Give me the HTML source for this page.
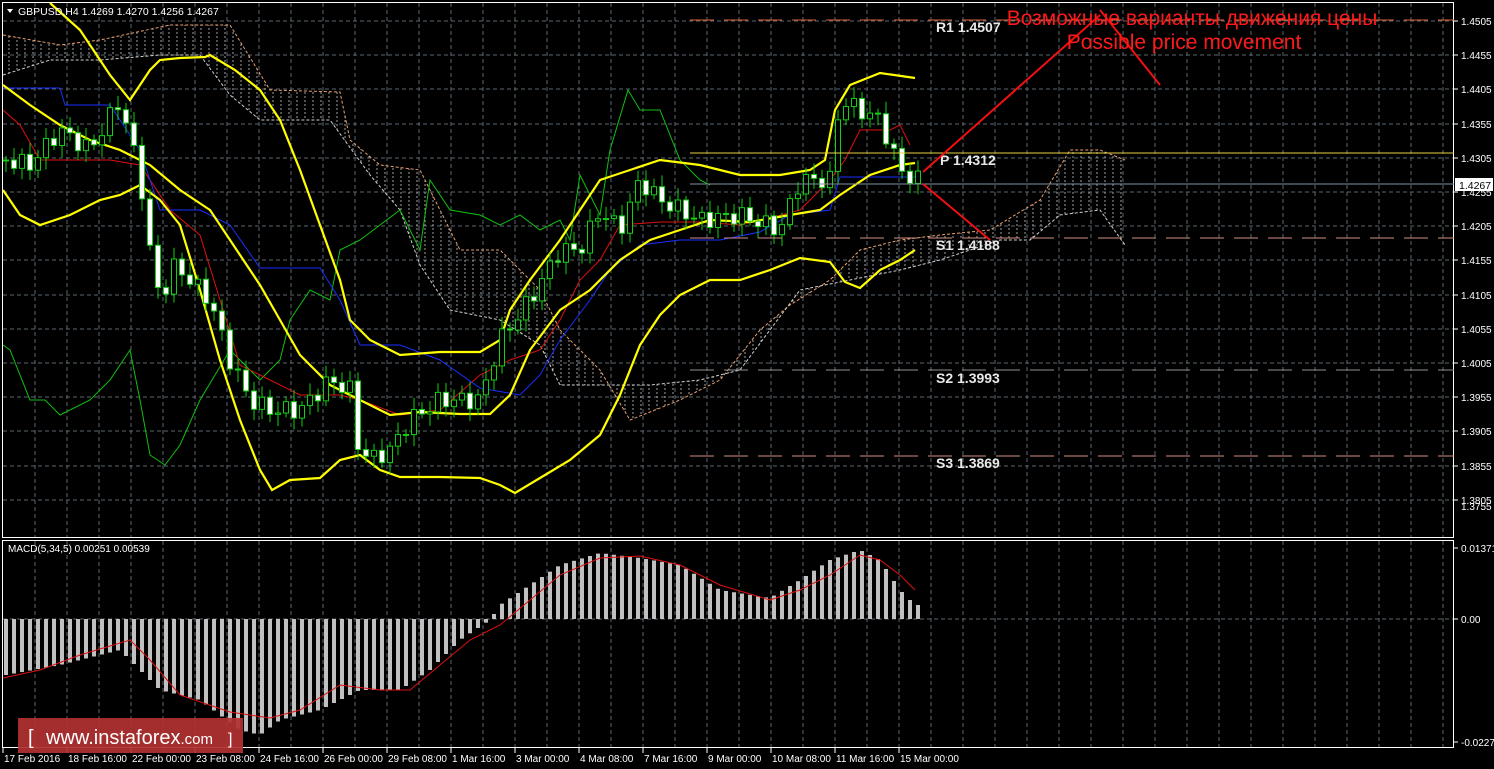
<!DOCTYPE html>
<html><head><meta charset="utf-8"><style>
html,body{margin:0;padding:0;background:#000;width:1494px;height:769px;overflow:hidden}
svg{display:block}
text{font-family:"Liberation Sans",sans-serif}
</style></head><body>
<svg id="s" width="1494" height="769" xmlns="http://www.w3.org/2000/svg">
<rect width="1494" height="769" fill="#000"/>
<defs>
<pattern id="hat" width="8" height="4" patternUnits="userSpaceOnUse"><line x1="1" y1="0" x2="1" y2="2" stroke="#c8c8c8" stroke-width="1"/></pattern>
</defs>
<g id="grid"></g>
<g id="cloud"></g>
<g id="lines"></g>
<g id="cand"></g>
<g id="macd"></g>
<rect x="2.5" y="2.5" width="1451" height="535" fill="none" stroke="#fff"/>
<rect x="2.5" y="540.5" width="1451" height="207" fill="none" stroke="#fff"/>
<line x1="690" y1="20" x2="1454" y2="20" stroke="#e0603a" stroke-dasharray="24,10"/>
<line x1="690" y1="153" x2="1454" y2="153" stroke="#e8d040"/>
<line x1="690" y1="184" x2="1454" y2="184" stroke="#8090a0"/>
<line x1="690" y1="238" x2="1454" y2="238" stroke="#d09080" stroke-dasharray="24,10"/>
<line x1="690" y1="370" x2="1454" y2="370" stroke="#909090" stroke-dasharray="24,10"/>
<line x1="690" y1="456" x2="1454" y2="456" stroke="#d09080" stroke-dasharray="24,10"/>
<g font-family="Liberation Mono,monospace" font-size="14" fill="#e8e8e8" font-weight="bold">
<text x="936" y="32">R1 1.4507</text>
<text x="940" y="165">P 1.4312</text>
<text x="936" y="250">S1 1.4188</text>
<text x="936" y="383">S2 1.3993</text>
<text x="936" y="468">S3 1.3869</text>
</g>
<g stroke="#f01010" stroke-width="2" fill="none">
<line x1="923" y1="172" x2="1100" y2="15"/>
<line x1="1100" y1="10" x2="1160" y2="85"/>
<line x1="923" y1="184" x2="990" y2="240"/>
</g>
<text x="1192" y="25" fill="#ff1a1a" font-size="21" text-anchor="middle">Возможные варианты движения цены</text>
<text x="1184" y="49" fill="#ff1a1a" font-size="21" text-anchor="middle">Possible price movement</text>
<path d="M7 9 L13 9 L10 13 Z" fill="#fff"/>
<text x="18" y="15" fill="#fff" font-size="10.5">GBPUSD,H4  1.4269 1.4270 1.4256 1.4267</text>
<text x="8" y="552" fill="#fff" font-size="10">MACD(5,34,5) 0.00251 0.00539</text>
<g id="axis" font-size="10" fill="#fff"></g>
<rect x="1455" y="178" width="38" height="13" fill="#fff"/>
<text x="1459" y="189" fill="#000" font-size="10.5">1.4267</text>
<rect x="18" y="718" width="225" height="35" fill="#b03232" opacity="0.93"/>
<text x="28" y="744" fill="#fff" font-size="20">[</text>
<text x="46" y="744" fill="#fff" font-size="20">www.instaforex<tspan font-size="15">.com</tspan></text>
<text x="228" y="744" fill="#fff" font-size="16">]</text>
</svg>
<script>
(function(){
var NS="http://www.w3.org/2000/svg";
function el(p,t,a){var e=document.createElementNS(NS,t);for(var k in a)e.setAttribute(k,a[k]);document.getElementById(p).appendChild(e);return e;}
function interp(pts,x){if(x<=pts[0][0])return pts[0][1];for(var i=1;i<pts.length;i++){if(x<=pts[i][0]){var a=pts[i-1],b=pts[i];return a[1]+(b[1]-a[1])*(x-a[0])/(b[0]-a[0]);}}return pts[pts.length-1][1];}
function pl(p,pts,c,w,extra){var s=pts.map(function(q){return q[0]+","+q[1]}).join(" ");var a={points:s,fill:"none",stroke:c,"stroke-width":w};for(var k in extra)a[k]=extra[k];el(p,"polyline",a);}
for(var x=3+32;x<1454;x+=32){el("grid","line",{x1:x,y1:3,x2:x,y2:537,stroke:"#5c6670","stroke-dasharray":"4,3"});el("grid","line",{x1:x,y1:541,x2:x,y2:747,stroke:"#5c6670","stroke-dasharray":"4,3"});}
var labs=["1.4505","1.4455","1.4405","1.4355","1.4305","1.4255","1.4205","1.4155","1.4105","1.4055","1.4005","1.3955","1.3905","1.3855","1.3805"];
for(var i=0;i<labs.length;i++){var y=Math.round(21+i*34.2);el("grid","line",{x1:3,y1:y,x2:1453,y2:y,stroke:"#5c6670","stroke-dasharray":"4,3"});el("axis","line",{x1:1454,y1:y,x2:1458,y2:y,stroke:"#fff"});var t=el("axis","text",{x:1461,y:y+4});t.textContent=labs[i];}
var t0=el("axis","text",{x:1461,y:510});t0.textContent="1.3755";
[["0.01371",548],["0.00",619],["-0.02275",742]].forEach(function(a){el("axis","line",{x1:1454,y1:a[1],x2:1458,y2:a[1],stroke:"#fff"});var t=el("axis","text",{x:1461,y:a[1]+4});t.textContent=a[0];});
el("grid","line",{x1:3,y1:619,x2:1453,y2:619,stroke:"#5c6670","stroke-dasharray":"4,3"});
var dl=["17 Feb 2016","18 Feb 16:00","22 Feb 00:00","23 Feb 08:00","24 Feb 16:00","26 Feb 00:00","29 Feb 08:00","1 Mar 16:00","3 Mar 00:00","4 Mar 08:00","7 Mar 16:00","9 Mar 00:00","10 Mar 08:00","11 Mar 16:00","15 Mar 00:00"];
for(var i=0;i<dl.length;i++){var x=3+i*64;el("axis","line",{x1:x,y1:748,x2:x,y2:753,stroke:"#fff"});var t=el("axis","text",{x:x+1,y:762});t.textContent=dl[i];}
var ctop=[[3,35],[60,45],[100,40],[170,25],[230,25],[270,90],[340,92],[350,140],[380,165],[420,170],[440,210],[460,250],[500,250],[540,290],[560,330],[600,370],[630,420],[680,400],[720,380],[760,330],[790,305],[830,280],[860,250],[900,240],[940,235],[990,230],[1040,200],[1070,150],[1100,150],[1125,160]];
var cbot=[[3,75],[50,60],[100,60],[160,55],[200,55],[230,95],[260,120],[330,120],[370,175],[400,210],[420,265],[450,310],[500,320],[540,345],[560,385],[620,385],[650,385],[700,380],[740,370],[770,330],[800,290],[850,280],[900,270],[940,260],[1000,240],[1030,240],[1060,215],[1100,210],[1125,245]];
var poly=ctop.concat(cbot.slice().reverse()).map(function(q){return q[0]+","+q[1]}).join(" ");
el("cloud","polygon",{points:poly,fill:"url(#hat)",opacity:"0.8"});
pl("cloud",ctop,"#e8a070",1,{"stroke-dasharray":"3,2"});
pl("cloud",cbot,"#d0d0d0",1,{"stroke-dasharray":"3,2"});
pl("lines",[[3,345],[10,350],[30,400],[45,400],[60,415],[90,400],[110,380],[130,350],[140,400],[150,455],[165,465],[180,445],[200,400],[230,350],[260,380],[280,360],[290,320],[310,290],[330,300],[340,250],[360,240],[380,225],[400,210],[420,250],[430,180],[450,210],[480,215],[500,225],[520,215],[540,230],[560,220],[570,240],[580,175],[600,215],[610,150],[628,90],[640,110],[660,110],[680,160],[700,180],[710,185]],"#10c010",1);
pl("lines",[[3,110],[20,125],[40,160],[80,160],[110,160],[140,165],[170,210],[200,235],[220,300],[240,365],[270,380],[300,395],[340,395],[360,400],[400,415],[440,410],[480,375],[510,360],[540,350],[560,320],[580,280],[600,260],[620,225],[660,222],[700,222],[740,225],[770,218],[800,210],[830,180],[845,160],[860,130],[890,130],[900,125],[910,145]],"#e01010",1);
pl("lines",[[3,88],[60,88],[65,105],[110,105],[140,150],[160,210],[200,210],[230,225],[260,268],[320,268],[340,300],[360,345],[400,345],[440,360],[480,388],[520,395],[540,375],[560,340],[590,300],[610,270],[640,245],[680,240],[720,240],[760,232],[790,215],[830,210],[840,177],[915,177]],"#1830ff",1);
var up=[[50,3],[80,30],[110,75],[130,100],[150,70],[160,60],[180,58],[205,57],[210,55],[235,70],[260,90],[280,120],[300,170],[320,225],[340,280],[350,320],[370,340],[400,355],[440,352],[480,352],[500,340],[510,310],[530,280],[560,240],[580,210],[600,180],[630,170],[660,160],[700,165],[740,175],[780,175],[810,170],[825,160],[835,110],[850,85],[880,73],[915,78]];
var mid=[[3,85],[30,105],[60,125],[90,140],[120,150],[150,165],[180,190],[210,210],[240,255],[260,285],[280,320],[300,355],[330,385],[360,400],[390,415],[420,412],[460,414],[490,414],[510,395],[530,350],[560,310],[590,290],[620,260],[650,240],[680,230],[710,220],[750,222],[790,215],[820,210],[840,195],[870,175],[900,165],[915,163]];
var lo=[[3,190],[20,215],[40,225],[70,215],[100,200],[120,195],[140,185],[160,200],[180,225],[200,290],[220,360],[240,420],[260,470],[272,490],[290,480],[320,478],[340,460],[360,455],[380,470],[400,477],[440,477],[480,478],[500,485],[515,493],[540,478],[570,460],[600,435],[620,395],[640,345],[660,315],[680,295],[710,280],[740,280],[770,270],[800,258],[830,262],[845,282],[860,288],[880,270],[900,260],[915,250]];
pl("lines",up,"#ffff00",2.2);pl("lines",mid,"#ffff00",2.2);pl("lines",lo,"#ffff00",2.2);
var path=[[6,160],[30,165],[60,130],[90,150],[120,100],[140,175],[150,250],[160,300],[175,265],[210,300],[230,360],[250,400],[270,410],[300,410],[330,380],[350,390],[355,440],[370,460],[390,450],[410,420],[440,400],[480,400],[500,340],[530,300],[560,250],[580,250],[600,210],[620,230],[640,180],[660,200],[700,220],[740,215],[780,230],[800,180],[830,180],[840,100],[860,110],[880,120],[900,170],[915,180]];
var prev=160;
for(var i=0;i<115;i++){var x=6+8*i;var c=interp(path,x)+Math.sin(i*2.3)*9;var o=prev;prev=c;
var hi=Math.min(o,c)-4-Math.abs(Math.sin(i*1.7))*8,lw=Math.max(o,c)+4+Math.abs(Math.cos(i*1.3))*8;
var bull=c<o;el("cand","line",{x1:x,y1:hi,x2:x,y2:lw,stroke:"#10d010"});
el("cand","rect",{x:x-2.5,y:Math.min(o,c),width:5,height:Math.max(1,Math.abs(o-c)),fill:bull?"#000":"#fff",stroke:"#10d010"});}
var hist=[[6,675],[60,665],[120,650],[140,670],[160,690],[200,700],[240,730],[260,735],[280,720],[320,710],[360,690],[400,690],[430,670],[460,640],[490,620],[500,605],[530,585],[560,565],[600,553],[640,558],[680,565],[720,590],[770,598],[800,580],[830,560],[860,550],[880,560],[900,590],[915,605]];
var sig=[[3,678],[40,670],[80,655],[130,640],[150,660],[180,695],[230,712],[270,718],[300,710],[340,685],[380,690],[410,690],[440,665],[470,640],[500,625],[530,600],[560,575],[600,558],[640,556],[680,565],[720,585],[770,600],[800,590],[830,575],[860,555],[880,560],[900,575],[915,590]];
for(var i=0;i<115;i++){var x=6+8*i;var y=interp(hist,x);el("macd","rect",{x:x-2,y:Math.min(619,y),width:4,height:Math.abs(619-y),fill:"#c0c0c0"});}
pl("macd",sig,"#e01010",1);
})();
</script>
</body></html>
